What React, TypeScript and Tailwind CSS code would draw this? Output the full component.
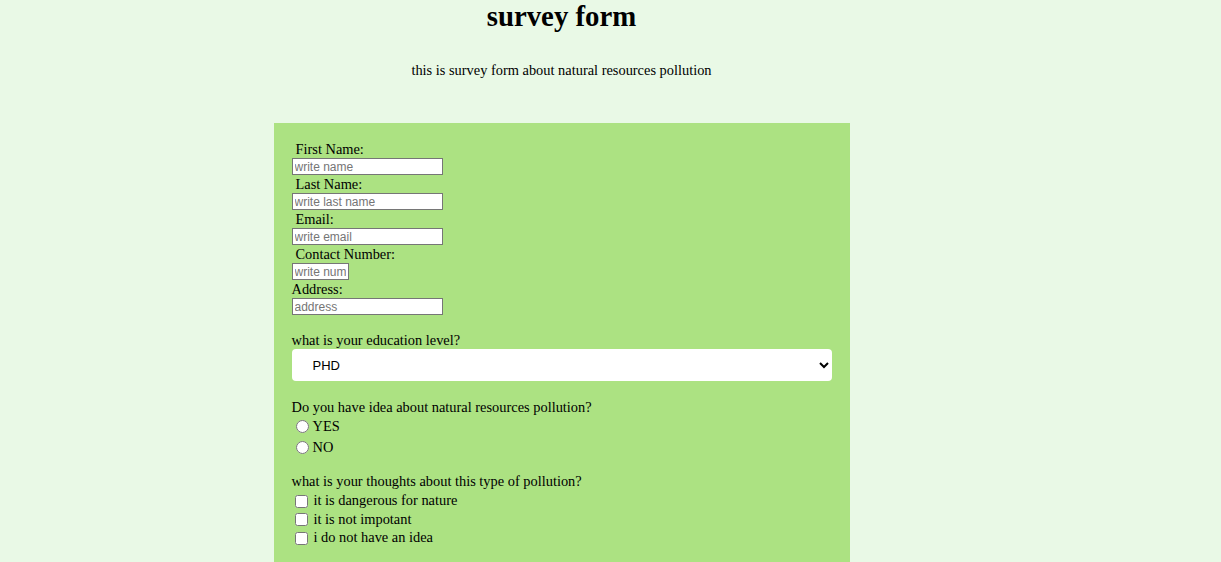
import React from "react";

const field = "block h-[17px] border border-[#767676] bg-white px-[2px] text-[12px] leading-[15px] font-['Liberation_Sans',Arial,sans-serif] placeholder:text-[#757575]";

export default function App() {
  return (
    <div className="min-h-screen bg-[#e9f9e6] font-['Liberation_Serif',serif] text-black text-[14.4px]">
      <div className="w-[1123px] flex flex-col items-center">
        <h1 className="text-[28.8px] leading-[32px] font-bold">survey form</h1>
        <p className="mt-[29px] leading-[18px]">this is survey form about natural resources pollution</p>

        <form className="mt-[44px] w-[576px] bg-[#ace282] px-[18px] pt-[17px] pb-[40px]">
          <label className="block pl-[4px] leading-[18px]">First Name:</label>
          <input className={`${field} w-[151px]`} placeholder="write name" />
          <label className="block pl-[4px] leading-[18px]">Last Name:</label>
          <input className={`${field} w-[151px]`} placeholder="write last name" />
          <label className="block pl-[4px] leading-[18px]">Email:</label>
          <input className={`${field} w-[151px]`} placeholder="write email" />
          <label className="block pl-[4px] leading-[18px]">Contact Number:</label>
          <input className={`${field} w-[57px]`} placeholder="write number" />
          <label className="block leading-[18px]">Address:</label>
          <input className={`${field} w-[151px]`} placeholder="address" />

          <p className="mt-[16px] leading-[18px]">what is your education level?</p>
          <select
            defaultValue="phd"
            className="block w-full h-[32px] bg-white rounded-[4px] pl-[17px] pr-[6px] text-[13px] font-['Liberation_Sans',Arial,sans-serif]"
          >
            <option value="school">High School</option>
            <option value="bachelor">Bachelor</option>
            <option value="master">Master</option>
            <option value="phd">PHD</option>
          </select>

          <p className="mt-[17px] leading-[18px]">Do you have idea about natural resources pollution?</p>
          <div className="flex flex-col">
            <label className="flex items-center h-[21px]">
              <input type="radio" name="idea" className="m-0 ml-[4px] mr-[4px] w-[13px] h-[13px]" />
              YES
            </label>
            <label className="flex items-center h-[21px]">
              <input type="radio" name="idea" className="m-0 ml-[4px] mr-[4px] w-[13px] h-[13px]" />
              NO
            </label>
          </div>

          <p className="mt-[14px] leading-[18px]">what is your thoughts about this type of pollution?</p>
          <div className="flex flex-col pt-[2px]">
            <label className="flex items-center h-[18.5px]">
              <input type="checkbox" className="m-0 ml-[3px] mr-[6px] w-[13px] h-[13px]" />
              it is dangerous for nature
            </label>
            <label className="flex items-center h-[18.5px]">
              <input type="checkbox" className="m-0 ml-[3px] mr-[6px] w-[13px] h-[13px]" />
              it is not impotant
            </label>
            <label className="flex items-center h-[18.5px]">
              <input type="checkbox" className="m-0 ml-[3px] mr-[6px] w-[13px] h-[13px]" />
              i do not have an idea
            </label>
          </div>
        </form>
      </div>
    </div>
  );
}
